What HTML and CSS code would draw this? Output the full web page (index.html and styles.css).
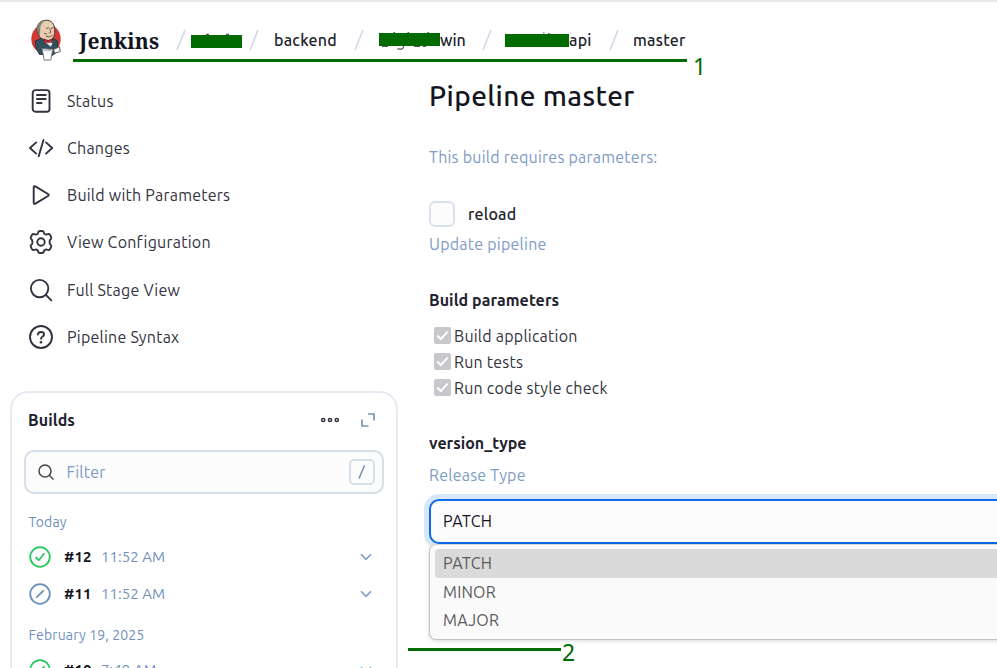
FILE: index.html
```html
<!DOCTYPE html>
<html lang="en">
<head>
<meta charset="utf-8">
<title>Pipeline master - Jenkins</title>
<link rel="stylesheet" href="styles.css">
</head>
<body>
<header class="header">
  <svg class="logo" viewBox="0 0 32 44">
    <ellipse cx="16" cy="21" rx="15.4" ry="16" fill="#d33833"/>
    <path d="M5 23L12 20L23 20L28 23L28 34L23 38L9 37L5 28Z" fill="#335061" stroke="#26343e"/>
    <path d="M9 18C5 12 6 3 14 1.5C22 0 26 6 25 14C25 20 21 24 16 22C12 21 10 20 9 18Z" fill="#e6cdb0" stroke="#3c3532"/>
    <path d="M8 16C5 8 8 2 15 1.5C10 5 10 8 10 12L9.5 17Z" fill="#858175"/>
    <path d="M16 10L19 9M21 10L24 9M20 10L21 14L19 15M16 18Q20 20 23 17M14 15L17 16" fill="none" stroke="#6d5144" stroke-width="1"/>
    <path d="M14 21L18 23L22 21L22 26L18 24L15 26Z" fill="#d33833" stroke="#81191c" stroke-width=".7"/>
    <path d="M16 25L23 25L21 29Z" fill="#e7ebed"/>
    <path d="M24 32L30 29L31 34L25 36Z" fill="#fff" stroke="#555"/>
    <path d="M12 31L23 32L21 43L14 43Z" fill="#fff" stroke="#65737c"/>
    <path d="M12 32Q18 35 23 32" fill="none" stroke="#aaa"/>
  </svg>
  <span class="brand">Jenkins</span>
  <nav class="crumbs">
    <svg class="slash" viewBox="0 0 10 22"><path d="M1 21L9 1"/></svg>
    <span class="crumb crumb-a"><svg class="mask" width="51" height="20" viewBox="0 0 51 20"><path class="trace" d="M15 6.4H18M35 6.4H38"/><rect y="7" width="51" height="13"/></svg></span>
    <svg class="slash" viewBox="0 0 10 22"><path d="M1 21L9 1"/></svg>
    <span class="crumb crumb-b">backend</span>
    <svg class="slash" viewBox="0 0 10 22"><path d="M1 21L9 1"/></svg>
    <span class="crumb crumb-c"><svg class="mask" width="61" height="24" viewBox="0 0 61 24"><path class="trace" d="M14.5 4.5H16M28.5 4.5H30M48.5 4.5H50M3 18.4H9M18.5 20.6Q24.5 22.5 24.7 18M35 18.4H41M44 18.4H47"/><rect y="5" width="61" height="13"/></svg>win</span>
    <svg class="slash" viewBox="0 0 10 22"><path d="M1 21L9 1"/></svg>
    <span class="crumb crumb-d"><svg class="mask" width="64" height="20" viewBox="0 0 64 20"><path class="trace" d="M38 5H39.5M43 5.6H44.5"/><rect y="6" width="64" height="13"/></svg>api</span>
    <svg class="slash" viewBox="0 0 10 22"><path d="M1 21L9 1"/></svg>
    <span class="crumb crumb-e">master</span>
  </nav>
</header>
<div class="page">
  <aside class="side">
    <nav class="tasks">
      <a class="task"><svg viewBox="0 0 24 24"><rect x="3.7" y="1.1" width="16.8" height="21.6" rx="2.8"/><path d="M8 6H16.8M8 10H16.8M8 14H12.5"/></svg><span>Status</span></a>
      <a class="task"><svg viewBox="0 0 24 24"><path d="M7.2 6.4L1 12L7.2 17.6M17 6.4L23.2 12L17 17.6M14.5 4L9.7 20.3"/></svg><span>Changes</span></a>
      <a class="task"><svg viewBox="0 0 24 24"><path d="M4.7 4.1C4.7 3 5.5 2.9 6.4 3.4L19 11C20 11.6 20 12.4 19 13L6.4 20.6C5.5 21.1 4.7 21 4.7 19.9Z"/></svg><span>Build with Parameters</span></a>
      <a class="task"><svg viewBox="0 0 24 24"><path d="M9.1 2.5Q9.4 1 11 1H13Q14.6 1 14.9 2.5L15.2 3.7Q17 4.8 17.9 4.3Q20 3.5 20.9 4.8L22 6.8Q22.8 8.1 21.8 9.2L20.8 10.2Q20.4 12 20.8 13.8L21.8 14.8Q22.8 15.9 22 17.2L20.9 19.2Q20 20.5 17.9 19.7Q17 19.2 15.2 20.3L14.9 21.5Q14.6 23 13 23H11Q9.4 23 9.1 21.5L8.8 20.3Q7 19.2 6.1 19.7Q4 20.5 3.1 19.2L2 17.2Q1.2 15.9 2.2 14.8L3.2 13.8Q3.6 12 3.2 10.2L2.2 9.2Q1.2 8.1 2 6.8L3.1 4.8Q4 3.5 6.1 4.3Q7 4.8 8.8 3.7Z"/><circle cx="12" cy="12" r="3.7"/></svg><span>View Configuration</span></a>
      <a class="task"><svg viewBox="0 0 24 24"><circle cx="10.6" cy="10.6" r="8.7"/><path d="M17 17L22.3 22.3"/></svg><span>Full Stage View</span></a>
      <a class="task"><svg viewBox="0 0 24 24"><circle cx="12" cy="12" r="11"/><path d="M8.9 9.5C9.1 7.8 10.3 7 12 7C13.9 7 15.1 8 15.1 9.4C15.1 11.6 12 11.4 12 13.7"/><circle class="fill" cx="12" cy="17.2" r="1.3"/></svg><span>Pipeline Syntax</span></a>
    </nav>
    <section class="builds">
      <div class="builds-head">
        <span class="builds-title">Builds</span>
        <svg class="dots" viewBox="0 0 20 6"><circle cx="3.2" cy="3" r="1.6"/><circle cx="10" cy="3" r="1.6"/><circle cx="16.8" cy="3" r="1.6"/></svg>
        <svg class="expand" viewBox="0 0 14 14"><path d="M7 1H13V7.5M1 6.5V13H7.5"/></svg>
      </div>
      <div class="filter">
        <svg class="glass" viewBox="0 0 16 16"><circle cx="7" cy="7" r="6"/><path d="M11.5 11.5L15.5 15.5"/></svg>
        <span class="filter-text">Filter</span>
        <span class="key"><svg viewBox="0 0 8 14"><path d="M1 13.5L6.5 .5"/></svg></span>
      </div>
      <div class="day day-today">Today</div>
      <div class="build"><svg class="ball ok" viewBox="0 0 22 22"><circle cx="11" cy="11" r="9.8"/><path d="M7 11.5L9.8 14.2L15 7.8"/></svg><b>#12</b><span>11:52 AM</span><svg class="chev" viewBox="0 0 12 8"><path d="M1 1.3L6 6.3L11 1.3"/></svg></div>
      <div class="build"><svg class="ball" viewBox="0 0 22 22"><circle cx="11" cy="11" r="9.8"/><path d="M7.8 14.2L14.2 7.8"/></svg><b>#11</b><span>11:52 AM</span><svg class="chev" viewBox="0 0 12 8"><path d="M1 1.3L6 6.3L11 1.3"/></svg></div>
      <div class="day day-feb">February 19, 2025</div>
      <div class="build"><svg class="ball ok" viewBox="0 0 22 22"><circle cx="11" cy="11" r="9.8"/><path d="M7 11.5L9.8 14.2L15 7.8"/></svg><b>#10</b><span>7:49 AM</span><svg class="chev" viewBox="0 0 12 8"><path d="M1 1.3L6 6.3L11 1.3"/></svg></div>
    </section>
  </aside>
  <main class="main">
    <h1>Pipeline master</h1>
    <p class="intro">This build requires parameters:</p>
    <div class="reload"><i class="box"></i><span>reload</span></div>
    <p class="desc update">Update pipeline</p>
    <h2 class="bp">Build parameters</h2>
    <ul class="checks">
      <li><svg viewBox="0 0 17 17"><rect width="17" height="17" rx="2"/><path d="M3.3 8.5L6.8 12L13.7 4.6"/></svg><span>Build application</span></li>
      <li><svg viewBox="0 0 17 17"><rect width="17" height="17" rx="2"/><path d="M3.3 8.5L6.8 12L13.7 4.6"/></svg><span>Run tests</span></li>
      <li><svg viewBox="0 0 17 17"><rect width="17" height="17" rx="2"/><path d="M3.3 8.5L6.8 12L13.7 4.6"/></svg><span>Run code style check</span></li>
    </ul>
    <h2 class="vt">version_type</h2>
    <p class="desc rt">Release Type</p>
    <div class="select">PATCH</div>
    <div class="options">
      <div class="option selected">PATCH</div>
      <div class="option">MINOR</div>
      <div class="option">MAJOR</div>
    </div>
  </main>
</div>
<i class="rule rule-1"></i><span class="note note-1">1</span>
<i class="rule rule-2"></i><span class="note note-2">2</span>
</body>
</html>
```
FILE: styles.css
```css
* { box-sizing: border-box; }
body {
  margin: 0;
  width: 997px;
  height: 668px;
  overflow: hidden;
  position: relative;
  background: #fff;
  color: #333340;
  font: 16px/24px Ubuntu, "Noto Sans", sans-serif;
  letter-spacing: .23px;
}
svg { display: block; flex: none; fill: none; overflow: visible; }
h1, h2, p, ul { margin: 0; padding: 0; }
span { white-space: nowrap; }

.header {
  height: 78px;
  border-top: 2px solid #e8e8e8;
  padding-left: 30px;
  display: flex;
  align-items: flex-start;
}
.logo { width: 32px; height: 42px; margin-top: 17px; }
.brand {
  width: 98px;
  padding-left: 17px;
  margin-top: 25px;
  font: bold 21px/28px "Noto Serif", "Droid Serif", "DejaVu Serif Condensed", "DejaVu Serif", serif;
  letter-spacing: .15px;
  color: #14141f;
}
.crumbs { display: flex; padding-left: 16px; margin-top: 26px; color: #22222e; }
.slash { width: 10px; height: 22px; margin-top: 1px; stroke: #d3dbe8; stroke-width: 1.8; }
.crumb { display: flex; line-height: 24px; white-space: nowrap; font-weight: 500; }
.crumb-a { width: 63px; padding-left: 5px; }
.crumb-b { width: 95px; padding-left: 15px; }
.crumb-c { width: 118px; padding-left: 15px; letter-spacing: 0; }
.crumb-d { width: 117px; padding-left: 13px; }
.crumb-e { padding-left: 14px; }
.mask { fill: #006b00; }
.trace { fill: none; stroke: #55556a; stroke-width: 1.2; }

.page { display: grid; grid-template-columns: 429px 1fr; }
.side { padding-left: 10px; }
.tasks { height: 313px; }
.task { display: flex; align-items: center; gap: 14px; height: 47.15px; padding-left: 19px; position: relative; top: -.6px; }
.task svg { width: 24px; height: 24px; stroke: #333340; stroke-width: 1.9; stroke-linecap: round; stroke-linejoin: round; }
.task .fill { fill: #333340; stroke: none; }

.builds {
  width: 388px;
  height: 277px;
  overflow: hidden;
  border: 2px solid #e6ebf3;
  border-bottom: 0;
  border-radius: 18px 18px 0 0;
  padding: 0 12px;
}
.builds-head { display: flex; align-items: center; height: 57px; padding: 0 9px 4px 4px; }
.builds-title { flex: 1; font-weight: 600; letter-spacing: .1px; color: #22222e; }
.dots { width: 20px; height: 6px; stroke: #33333f; stroke-width: 1.5; }
.expand { width: 14px; height: 14px; margin-left: 21px; stroke: #7896bd; stroke-width: 1.7; }
.filter {
  height: 44px;
  border: 2px solid #d5dfea;
  border-radius: 10px;
  background: #fcfcfd;
  display: flex;
  align-items: center;
  padding: 0 7px 0 12px;
}
.glass { width: 16px; height: 16px; stroke: #45454f; stroke-width: 1.5; }
.filter-text { flex: 1; padding-left: 12.5px; margin-top: -1px; color: #7d9bc5; }
.key { width: 26px; height: 26px; border: 2px solid #d5dfea; border-radius: 5px; display: grid; place-items: center; }
.key svg { width: 8px; height: 14px; stroke: #7190bb; stroke-width: 1.5; }
.day { padding-left: 4.5px; font-size: 14px; line-height: 20px; letter-spacing: .15px; color: #6f90bb; }
.day-today { margin-top: 18px; margin-bottom: 6px; }
.day-feb { margin-top: 12px; margin-bottom: 6px; }
.build { display: flex; align-items: center; height: 37.5px; padding: 0 12px 0 5px; font-size: 15px; letter-spacing: .05px; color: #7190bb; }
.build b { width: 37px; margin-left: 13px; font-weight: 600; color: #14141f; }
.build span { flex: 1; }
.ball { width: 22px; height: 22px; stroke: #6f8fb8; stroke-width: 1.8; stroke-linecap: round; stroke-linejoin: round; }
.ok { stroke: #2bc864; }
.chev { width: 12px; height: 8px; stroke: #7d9bc5; stroke-width: 1.6; }

.main h1 { font-size: 28px; line-height: 36px; font-weight: 500; letter-spacing: .4px; color: #14141f; }
.intro { margin-top: 31px; color: #7d9bc5; }
.reload { display: flex; align-items: center; height: 26px; margin-top: 32px; font-weight: 500; color: #22222e; }
.box { width: 26px; height: 26px; border: 2px solid #d9e1ec; border-radius: 6px; background: #fcfcfd; margin-right: 13px; }
.desc { color: #7d9bc5; }
.update { margin-top: 5px; }
.main h2 { font-size: 16px; line-height: 24px; font-weight: 600; letter-spacing: .07px; color: #22222e; }
.bp { margin-top: 32px; }
.checks { list-style: none; margin-top: 11px; }
.checks li { display: flex; align-items: center; height: 26px; padding-left: 5px; gap: 3px; }
.checks svg { width: 17px; height: 17px; position: relative; top: -1px; }
.checks rect { fill: #c7c7ce; }
.checks path { stroke: #fff; stroke-width: 2; }
.main .vt { margin-top: 30px; letter-spacing: 0; }
.rt { margin-top: 8px; }
.select {
  width: 600px;
  height: 45px;
  margin-top: 12px;
  border: 2px solid #0b6be8;
  border-radius: 10px;
  box-shadow: 0 0 0 5px #d7e7fc;
  background: #fcfcfd;
  padding-left: 12px;
  line-height: 41px;
  color: #14141f;
}
.options {
  position: relative;
  width: 600px;
  height: 96px;
  border: 1px solid #c3c3c3;
  border-top-color: #d9d9d9;
  border-radius: 7px;
  background: #fafafa;
  padding: 4.4px 5px;
  box-shadow: 0 1px 4px rgba(0, 0, 0, .15);
}
.option { height: 28.2px; line-height: 28px; padding-left: 8px; border-radius: 4px; color: #5a5a5a; }
.selected { background: #dadada; }

.rule { position: absolute; height: 3px; background: #006b00; }
.rule-1 { left: 73px; top: 59px; width: 614px; }
.rule-2 { left: 408px; top: 648px; width: 153px; }
.note { position: absolute; color: #006b00; font: 23px/28px "Noto Sans", sans-serif; }
.note-1 { left: 693px; top: 52px; }
.note-2 { left: 562px; top: 638px; }
```
